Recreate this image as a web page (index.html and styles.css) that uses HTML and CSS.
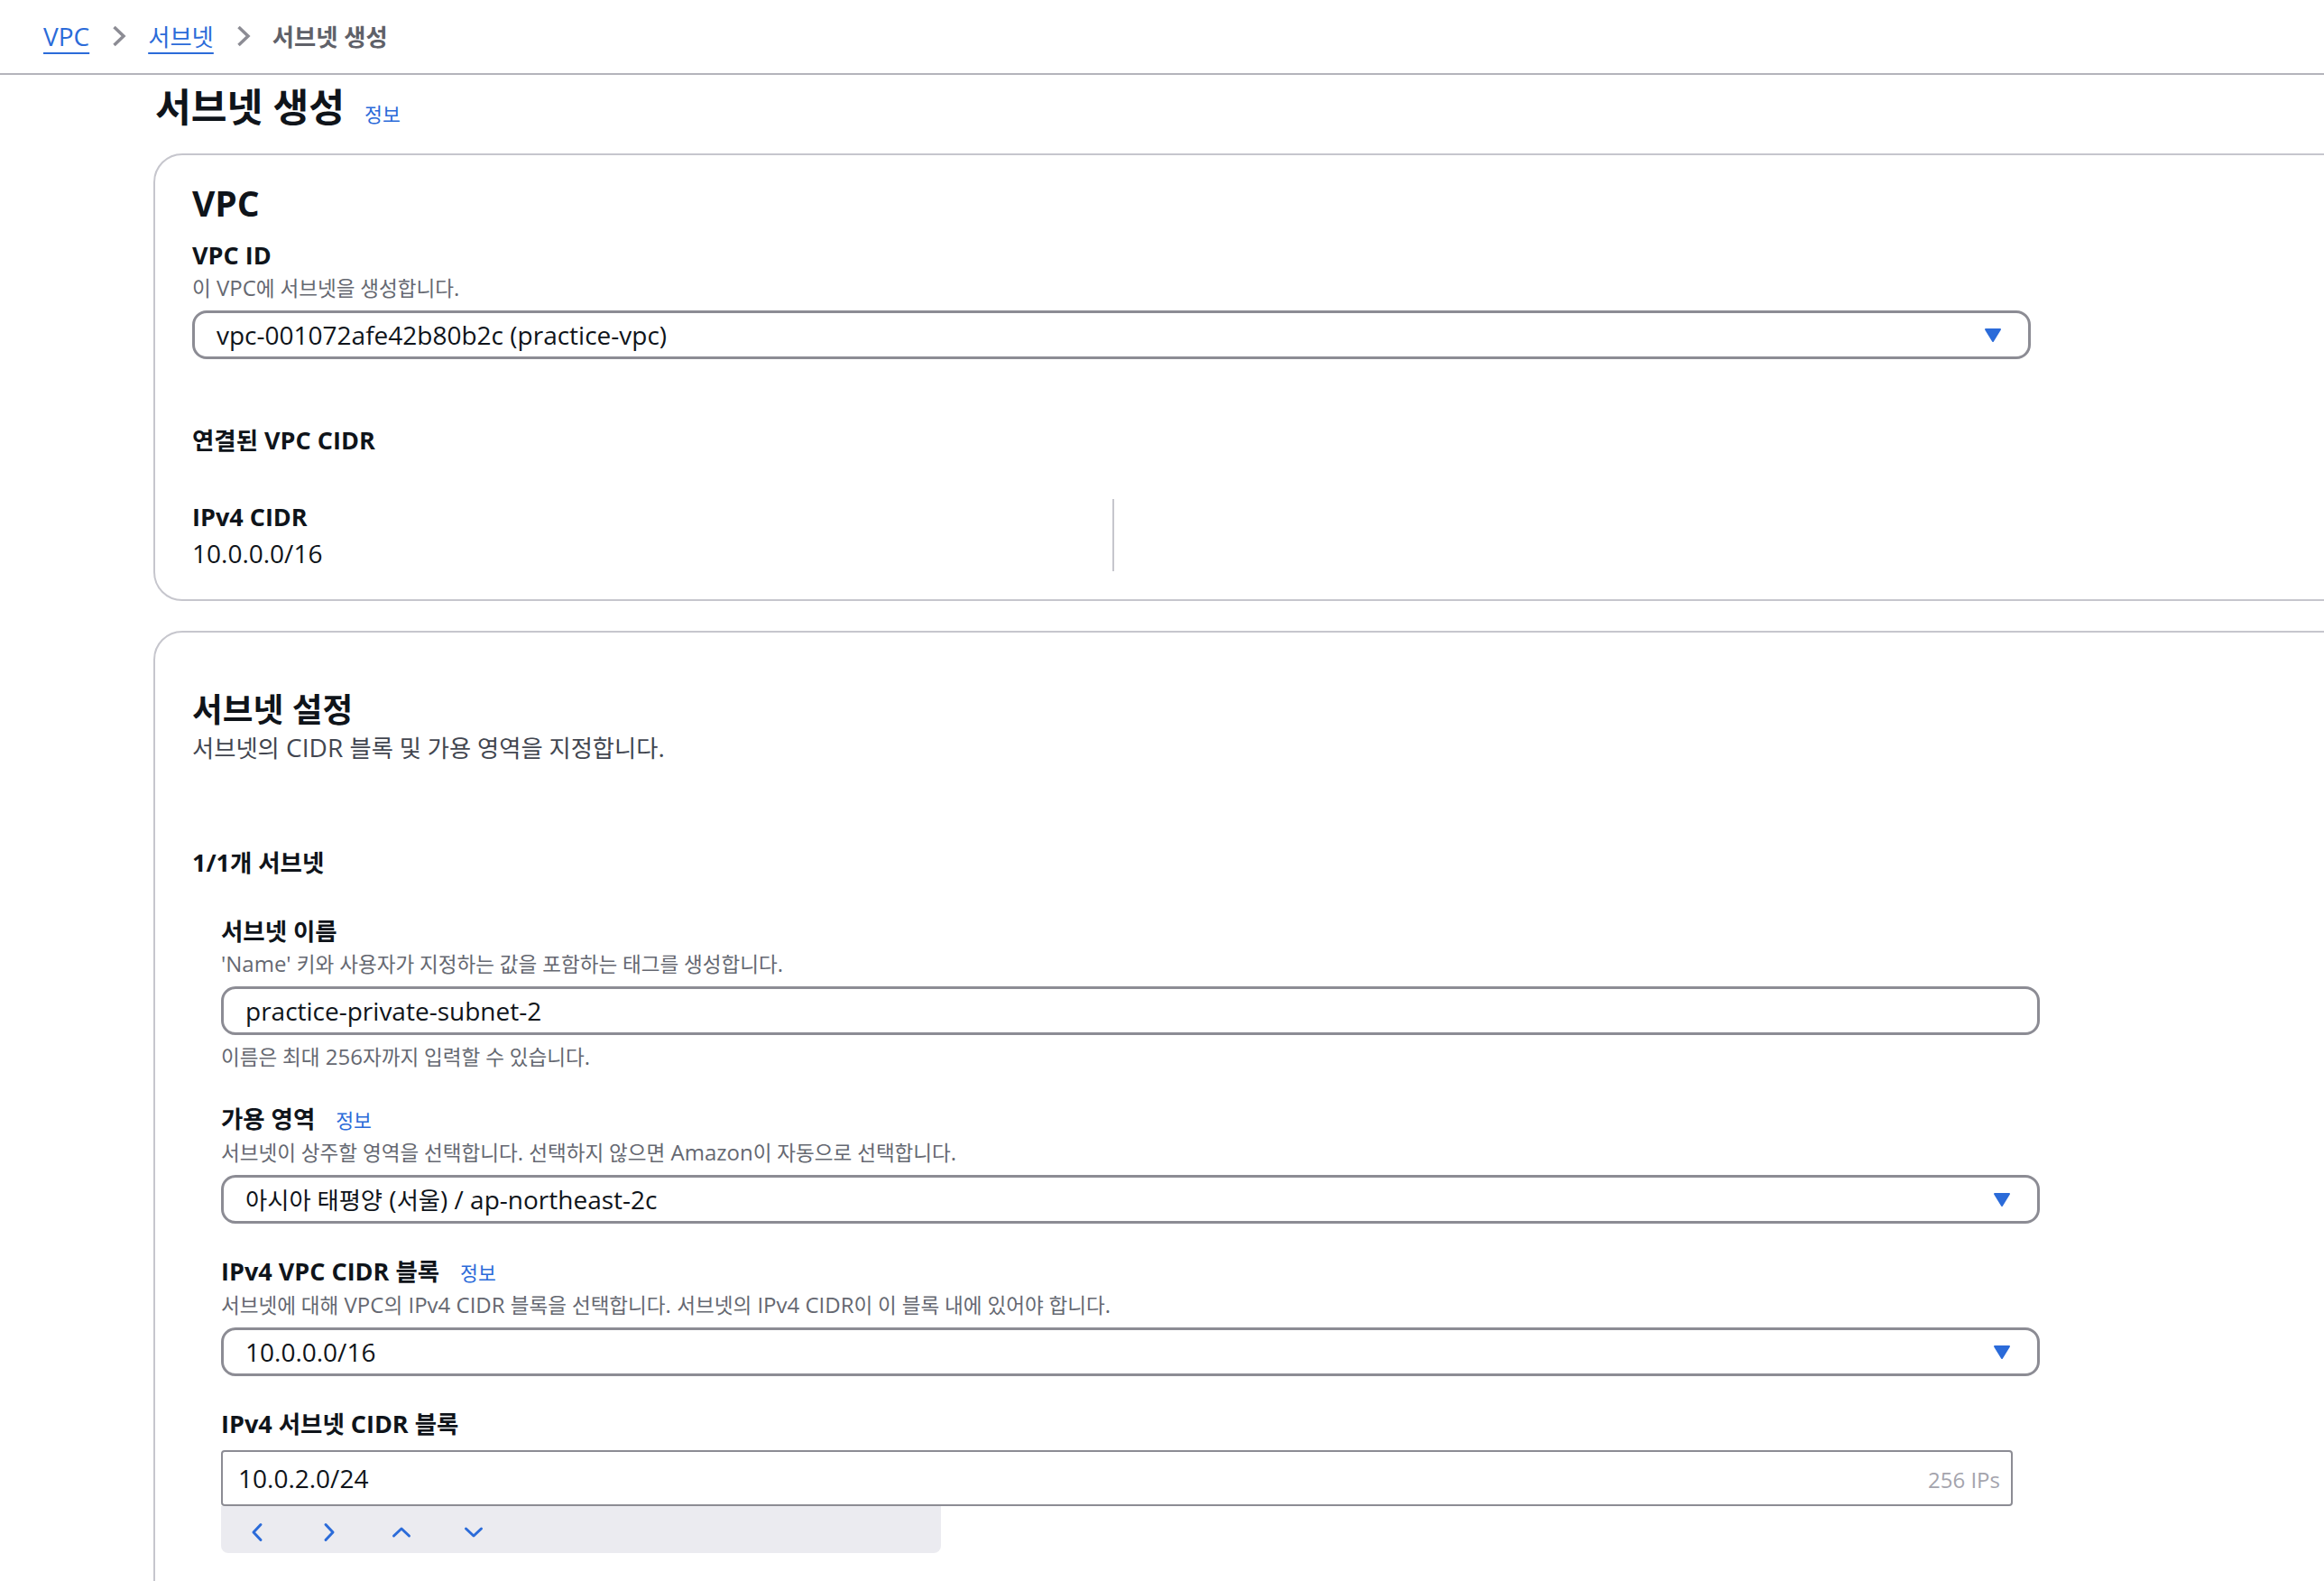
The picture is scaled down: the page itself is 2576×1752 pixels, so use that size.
FILE: index.html
```html
<!DOCTYPE html>
<html lang="ko">
<head>
<meta charset="utf-8">
<title>서브넷 생성</title>
<link rel="stylesheet" href="styles.css">
</head>
<body>
<nav class="breadcrumbs">
  <a class="crumb-link" href="#">VPC</a>
  <svg class="crumb-sep" viewBox="0 0 18 26"><path d="M3.5 3 L14 13 L3.5 23"/></svg>
  <a class="crumb-link" href="#"><span class="ko">서브넷</span></a>
  <svg class="crumb-sep" viewBox="0 0 18 26"><path d="M3.5 3 L14 13 L3.5 23"/></svg>
  <span class="crumb-current"><span class="ko">서브넷 생성</span></span>
</nav>

<main class="page">
  <div class="page-header">
    <h1><span class="ko">서브넷 생성</span></h1>
    <a class="info" href="#"><span class="ko">정보</span></a>
  </div>

  <section class="container">
    <h2>VPC</h2>
    <div class="field field--vpc">
      <div class="label">VPC ID</div>
      <div class="desc"><span class="ko">이</span> VPC<span class="ko">에 서브넷을 생성합니다</span>.</div>
      <div class="control select select--vpc">
        <span class="select-value">vpc-001072afe42b80b2c (practice-vpc)</span>
        <svg class="caret" viewBox="0 0 20 17"><path d="M2 2 H18 L10 15 Z"/></svg>
      </div>
    </div>
    <h3 class="kv-title"><span class="ko">연결된</span> VPC CIDR</h3>
    <div class="kv-row">
      <div class="kv-col">
        <div class="label">IPv4 CIDR</div>
        <div class="kv-value">10.0.0.0/16</div>
      </div>
      <div class="kv-col"></div>
    </div>
  </section>

  <section class="container container--subnets">
    <h2><span class="ko">서브넷 설정</span></h2>
    <div class="header-desc"><span class="ko">서브넷의</span> CIDR <span class="ko">블록 및 가용 영역을 지정합니다</span>.</div>

    <div class="subnet-count">1/1<span class="ko">개 서브넷</span></div>

    <div class="subnet">
      <div class="field">
        <div class="label"><span class="ko">서브넷 이름</span></div>
        <div class="desc">'Name' <span class="ko">키와 사용자가 지정하는 값을 포함하는 태그를 생성합니다</span>.</div>
        <div class="control input">practice-private-subnet-2</div>
        <div class="desc hint"><span class="ko">이름은 최대</span> 256<span class="ko">자까지 입력할 수 있습니다</span>.</div>
      </div>

      <div class="field">
        <div class="label"><span class="ko">가용 영역</span><a class="info" href="#"><span class="ko">정보</span></a></div>
        <div class="desc"><span class="ko">서브넷이 상주할 영역을 선택합니다</span>. <span class="ko">선택하지 않으면</span> Amazon<span class="ko">이 자동으로 선택합니다</span>.</div>
        <div class="control select">
          <span class="select-value"><span class="ko">아시아 태평양</span> (<span class="ko">서울</span>) / ap-northeast-2c</span>
          <svg class="caret" viewBox="0 0 20 17"><path d="M2 2 H18 L10 15 Z"/></svg>
        </div>
      </div>

      <div class="field">
        <div class="label">IPv4 VPC CIDR <span class="ko">블록</span><a class="info" href="#"><span class="ko">정보</span></a></div>
        <div class="desc"><span class="ko">서브넷에 대해</span> VPC<span class="ko">의</span> IPv4 CIDR <span class="ko">블록을 선택합니다</span>. <span class="ko">서브넷의</span> IPv4 CIDR<span class="ko">이 이 블록 내에 있어야 합니다</span>.</div>
        <div class="control select">
          <span class="select-value">10.0.0.0/16</span>
          <svg class="caret" viewBox="0 0 20 17"><path d="M2 2 H18 L10 15 Z"/></svg>
        </div>
      </div>

      <div class="field">
        <div class="label">IPv4 <span class="ko">서브넷</span> CIDR <span class="ko">블록</span></div>
        <div class="control cidr-input">
          <span class="cidr-value">10.0.2.0/24</span>
          <span class="cidr-suffix">256 IPs</span>
        </div>
        <div class="stepper">
          <span class="step-btn"><svg viewBox="0 0 32 32"><path d="M20 7.5 L12 16 L20 24.5"/></svg></span>
          <span class="step-btn"><svg viewBox="0 0 32 32"><path d="M12 7.5 L20 16 L12 24.5"/></svg></span>
          <span class="step-btn"><svg viewBox="0 0 32 32"><path d="M7.5 20 L16 12 L24.5 20"/></svg></span>
          <span class="step-btn"><svg viewBox="0 0 32 32"><path d="M7.5 12 L16 20 L24.5 12"/></svg></span>
        </div>
      </div>
    </div>
  </section>
</main>
</body>
</html>
```

FILE: styles.css
```css
html, body {
  margin: 0;
  padding: 0;
  overflow: hidden;
  background: #ffffff;
}

body {
  width: 2576px;
  height: 1752px;
  font-family: "Open Sans", "Noto Sans CJK KR", sans-serif;
  font-size: 28px;
  line-height: 40px;
  color: #0f141a;
}

.ko {
  font-size: 0.94em;
  line-height: 1;
}

a {
  color: #2b6bd9;
  text-decoration: none;
}

/* Breadcrumbs */
.breadcrumbs {
  display: flex;
  align-items: center;
  height: 40px;
  padding: 20px 0 21px 48px;
  border-bottom: 2px solid #b4b4bb;
}

.crumb-link {
  color: #2b6bd9;
  text-decoration: underline;
  text-decoration-thickness: 2px;
  text-underline-offset: 7px;
  text-decoration-skip-ink: none;
}

.crumb-sep {
  width: 18px;
  height: 26px;
  margin: 0 23px 0 24px;
  fill: none;
  stroke: #8c8c94;
  stroke-width: 3.5;
}

.crumb-current {
  color: #5f6169;
  font-weight: 700;
}

/* Page */
.page {
  padding-left: 170px;
}

.page-header {
  display: flex;
  align-items: baseline;
  padding: 4px 0 0 2px;
  margin-bottom: 23px;
}

h1 {
  margin: 0;
  font-size: 46px;
  line-height: 60px;
  font-weight: 700;
}

.info {
  font-size: 24px;
  font-weight: 400;
  margin-left: 23px;
}

.page-header .info {
  margin-left: 22px;
}

/* Containers */
.container {
  box-sizing: border-box;
  width: 2800px;
  border: 2px solid #c6c6cd;
  border-radius: 32px;
  padding: 29px 41px 31px;
}

.container--subnets {
  margin-top: 33px;
  padding-top: 61px;
  padding-bottom: 400px;
}

h2 {
  margin: 0;
  font-size: 39px;
  line-height: 48px;
  font-weight: 700;
}

.container--subnets h2 {
  line-height: 46px;
}

.header-desc {
  color: #424650;
}

/* Form fields */
.label {
  font-size: 27px;
  line-height: 40px;
  font-weight: 700;
}

.label .ko,
.kv-title .ko,
.subnet-count .ko {
  font-size: 0.98em;
}

.info .ko {
  font-size: 0.9em;
}

.desc {
  font-size: 24px;
  line-height: 32px;
  color: #656871;
}

.field--vpc {
  margin-top: 14px;
}

.desc + .control {
  margin-top: 9px;
}

.select {
  box-sizing: border-box;
  display: flex;
  align-items: center;
  width: 2016px;
  height: 54px;
  padding: 0 29px 0 24px;
  border: 3px solid #8c8c94;
  border-radius: 16px;
}

.select--vpc {
  width: 2038px;
}

.select-value {
  flex: 1;
  white-space: nowrap;
}

.caret {
  width: 20px;
  height: 17px;
  fill: #2b6bd9;
  stroke: #2b6bd9;
  stroke-width: 2;
  stroke-linejoin: round;
}

.input {
  box-sizing: border-box;
  width: 2016px;
  height: 54px;
  padding: 4px 24px;
  border: 3px solid #8c8c94;
  border-radius: 16px;
}

.hint {
  margin-top: 8px;
}

/* Key-value */
.kv-title {
  margin: 70px 0 0;
  font-size: 27px;
  line-height: 40px;
  font-weight: 700;
}

.kv-row {
  display: flex;
  margin-top: 45px;
}

.kv-col {
  width: 1020px;
}

.kv-col + .kv-col {
  border-left: 2px solid #c6c6cd;
}

/* Subnets */
.subnet-count {
  margin-top: 88px;
  font-size: 27px;
  font-weight: 700;
}

.subnet {
  padding-left: 32px;
}

.subnet .field {
  margin-top: 33px;
}

.subnet .field:first-child {
  margin-top: 36px;
}

.label + .cidr-input {
  margin-top: 9px;
}

.cidr-input {
  box-sizing: border-box;
  display: flex;
  align-items: baseline;
  justify-content: space-between;
  width: 1986px;
  height: 62px;
  padding: 9px 12px 9px 17px;
  border: 2px solid #8c8c94;
  border-radius: 4px;
}

.cidr-suffix {
  font-size: 24px;
  color: #a4a4ad;
}

.stepper {
  display: flex;
  align-items: center;
  width: 798px;
  height: 52px;
  box-sizing: border-box;
  padding-top: 6px;
  background: #ebebf0;
  border-radius: 0 0 8px 8px;
}

.step-btn {
  display: flex;
  align-items: center;
  justify-content: center;
  width: 80px;
  height: 32px;
}

.step-btn svg {
  width: 32px;
  height: 32px;
  fill: none;
  stroke: #2b6bd9;
  stroke-width: 3;
  stroke-linecap: round;
  stroke-linejoin: round;
}
```
